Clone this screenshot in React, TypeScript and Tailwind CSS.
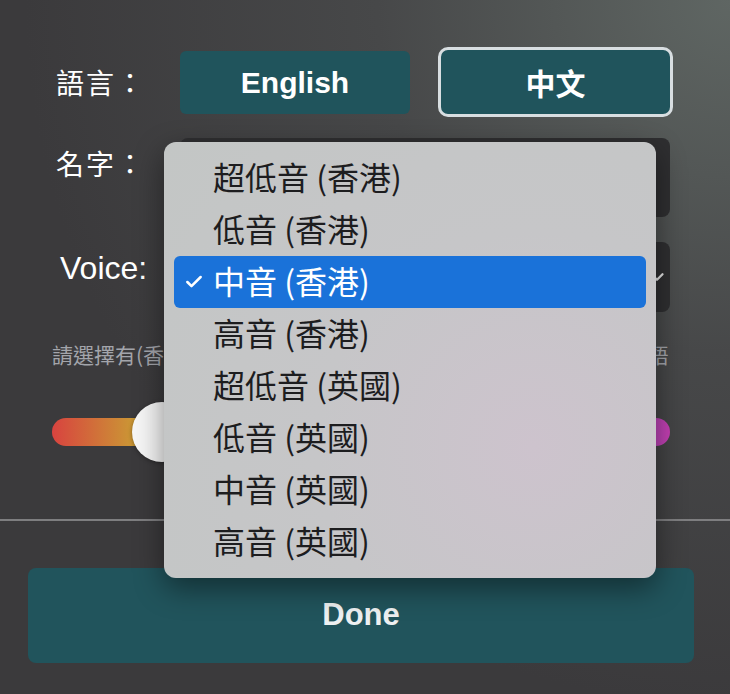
import { Check, ChevronDown } from "lucide-react";

// Voice options in the open popup menu
const VOICES = [
  "超低音 (香港)",
  "低音 (香港)",
  "中音 (香港)",
  "高音 (香港)",
  "超低音 (英國)",
  "低音 (英國)",
  "中音 (英國)",
  "高音 (英國)",
];

const SELECTED = 2;

const cjk = "font-['Noto_Sans_CJK_TC','Noto_Sans',sans-serif]";
const latin = "font-['Liberation_Sans',Arial,sans-serif]";

export default function App() {
  return (
    <div
      className={`relative h-[694px] w-[730px] overflow-hidden bg-[radial-gradient(circle_at_100%_0%,#5f6663_0%,#474849_35%,#3b3a3c_70%)] text-white ${cjk}`}
    >
      {/* Form */}
      <div className="pl-[52px] pr-[57px] pt-[47px]">
        {/* Language row */}
        <div className="flex h-[70px] items-center">
          <div className="w-[128px] pl-[4px] text-[28px] leading-none tracking-[2px]">語言：</div>
          <div className="flex items-center gap-[28px]">
            <button className={`h-[63px] w-[230px] rounded-[6px] bg-[#20545c] text-[30px] font-bold ${latin}`}>
              English
            </button>
            <button className="h-[70px] w-[235px] rounded-[10px] border-[3px] border-[#d8dee1] bg-[#20545c] text-[30px] font-bold">
              中文
            </button>
          </div>
        </div>

        {/* Name row */}
        <div className="mt-[21px] flex items-start">
          <div className="w-[128px] pl-[4px] pt-[11px] text-[28px] leading-none tracking-[2px]">名字：</div>
          <div className="mr-[3px] h-[79px] flex-1 rounded-[8px] bg-[#2f2f31]" />
        </div>

        {/* Voice row */}
        <div className="mt-[25px] flex items-start">
          <div className={`w-[128px] pl-[8px] pt-[10px] text-[32px] leading-none ${latin}`}>Voice:</div>
          <div className="mr-[3px] flex h-[70px] flex-1 items-center justify-end rounded-[8px] bg-[#2f2f31] pr-[2px]">
            <ChevronDown className="h-[22px] w-[22px] text-[#e6e6e6]" strokeWidth={2.5} />
          </div>
        </div>

        <p className="mt-[27px] whitespace-nowrap text-[21px] leading-[30px] text-[#a3a5ab]">
          請選擇有(香港)字樣的聲音來讀中文，有(英國)字樣的聲音來讀英語
        </p>

        {/* Pitch slider */}
        <div className="relative mr-[3px] mt-[33px] flex h-[60px] items-center">
          <div className="h-[28px] w-full rounded-full bg-[linear-gradient(90deg,#d8433f_0%,#c9a333_15%,#7fbf4a_35%,#3fb3c6_55%,#4a6fd8_75%,#c73fb3_100%)]" />
          <div className="absolute left-[80px] top-0 h-[60px] w-[60px] rounded-full bg-[#f7f7f7] shadow-[0_1px_4px_rgba(0,0,0,0.35)]" />
        </div>
      </div>

      <div className="mt-[57px] h-[2px] w-full bg-[#7e7e80]" />

      <div className="px-[28px] pt-[47px]">
        <button className={`h-[95px] w-[666px] rounded-[8px] bg-[#21545c] text-[31px] font-bold text-[#eef0f1] ${latin}`}>
          Done
        </button>
      </div>

      {/* Native-looking select popup */}
      <div className="absolute left-[164px] top-[142px] w-[492px] rounded-[12px] bg-[radial-gradient(circle_at_75%_70%,#cdc3cd_0%,#c6c6c8_45%,#c3c6c5_100%)] py-[10px] shadow-[0_10px_30px_rgba(0,0,0,0.45)]">
        {VOICES.map((v, i) => (
          <div
            key={v}
            className={`mx-[10px] flex h-[52px] items-center rounded-[6px] text-[32px] leading-none ${
              i === SELECTED ? "bg-[#1a72d9] text-white" : "text-[#1d1d1f]"
            }`}
          >
            <span className="flex w-[39px] justify-center">
              {i === SELECTED && <Check className="h-[20px] w-[20px]" strokeWidth={3} />}
            </span>
            <span className="-mt-[4px]">{v}</span>
          </div>
        ))}
      </div>
    </div>
  );
}
